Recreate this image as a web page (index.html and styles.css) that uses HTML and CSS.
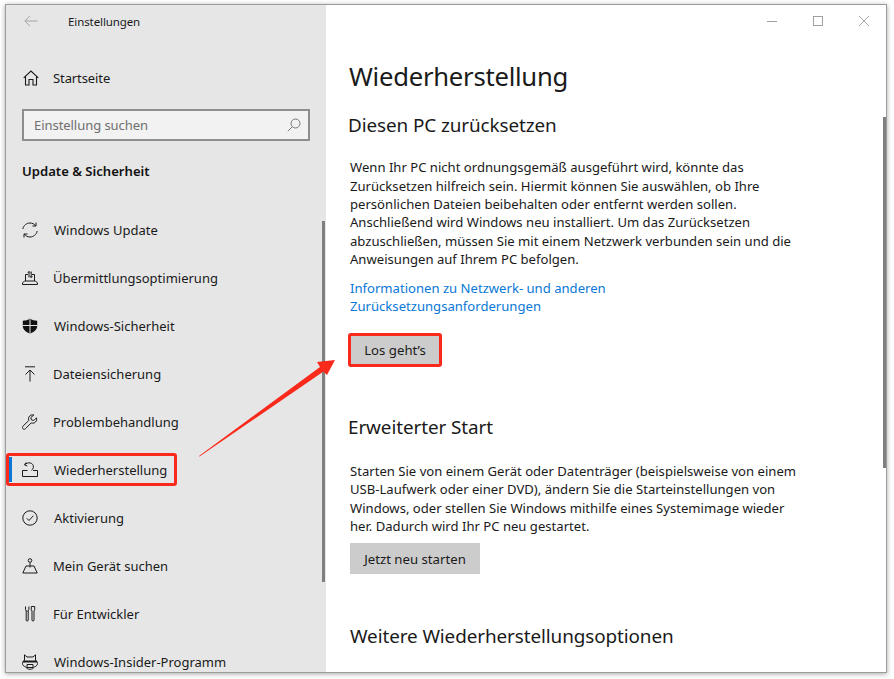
FILE: index.html
```html
<!DOCTYPE html>
<html lang="de">
<head>
<meta charset="utf-8">
<title>Einstellungen</title>
<link rel="stylesheet" href="styles.css">
</head>
<body>
<div class="window">
  <aside class="sidebar">
    <div class="titlebar">
      <svg class="back" width="14" height="12" viewBox="0 0 14 12"><path d="M13.500 6H1M6 .8 .8 6 6 11.200" fill="none" stroke="#a3a3a3" stroke-width="1"/></svg>
      <span class="apptitle">Einstellungen</span>
    </div>
    <div class="home">
      <svg class="icon" viewBox="0 0 16 16"><path d="M.7 7.800 8 1l7.300 6.800M2.500 6.500V15H6V9.500h4V15h3.500V6.500" fill="none" stroke="#1a1a1a" stroke-width="1.100"/></svg>
      <span>Startseite</span>
    </div>
    <div class="search">
      <span>Einstellung suchen</span>
      <svg width="14" height="14" viewBox="0 0 14 14"><circle cx="8.500" cy="5.500" r="4.500" fill="none" stroke="#777" stroke-width="1"/><path d="M5.300 8.700 .8 13.200" stroke="#777" stroke-width="1"/></svg>
    </div>
    <div class="section">Update &amp; Sicherheit</div>
    <nav class="nav">
      <div class="item">
        <svg class="icon" viewBox="0 0 16 16"><path d="M.8 7C1.500 3.500 4.500 1 8 1c2.300 0 4.400 1.100 5.700 2.800M15.200 9c-.7 3.500-3.700 6-7.200 6-2.300 0-4.400-1.100-5.700-2.800M14 .5V4h-3.500M2 15.500V12h3.500" fill="none" stroke="#1a1a1a" stroke-width="1"/></svg>
        <span>Windows Update</span>
      </div>
      <div class="item item-tight">
        <svg class="icon" viewBox="0 0 16 16"><path d="M3.500 11V4.500H6M12.500 11V4.500H10M.5 14.500h15v-1.500l-2-2h-11l-2 2zM7 7.500V1.500M5.800 2.800 7 1.500l1.200 1.300M9.200 1.500v6M8 6.200l1.200 1.300 1.200-1.300" fill="none" stroke="#1a1a1a" stroke-width="1"/></svg>
        <span>Übermittlungsoptimierung</span>
      </div>
      <div class="item">
        <svg class="icon" viewBox="0 0 16 16"><path d="M8 .5C6 2 3.500 2.700.8 2.700V8c0 3.500 3 6 7.200 7.500C12.200 14 15.200 11.500 15.200 8V2.700C12.500 2.700 10 2 8 .5z" fill="#111"/><path d="M8 .5v15M.8 7.500h14.400" stroke="#e6e6e6" stroke-width="1"/></svg>
        <span>Windows-Sicherheit</span>
      </div>
      <div class="item item-tight">
        <svg class="icon" viewBox="0 0 16 16"><path d="M3 .8h10M8 15.500V4M3.500 8.500 8 4l4.500 4.500" fill="none" stroke="#1a1a1a" stroke-width="1"/></svg>
        <span>Dateiensicherung</span>
      </div>
      <div class="item item-tight">
        <svg class="icon" viewBox="0 0 16 16"><path d="M10.500.8c-2.300 0-4 1.800-4 4 0 .6.100 1.100.3 1.600L1 12.200c-.8.800-.8 1.800-.1 2.500.8.800 1.700.8 2.500 0l5.800-5.800c.5.200 1 .3 1.500.3 2.300 0 4-1.800 4-4 0-.5-.1-1-.2-1.400l-2.700 2.700-2.400-.6-.6-2.400L11.900 1c-.4-.1-.9-.2-1.400-.2z" fill="none" stroke="#1a1a1a" stroke-width="1"/></svg>
        <span>Problembehandlung</span>
      </div>
      <div class="item active">
        <i class="marker"></i>
        <svg class="icon" viewBox="0 0 16 16"><path d="M.5 14.500h15v-6h-4.500M.5 14.500v-6h5M4 .5 2.500 2.800l2.800 1.200M2.800 2.800C4 1.300 6 .6 8 .9c2.300.4 3.700 2.400 3.400 4.500-.2 1.300-1 2.300-2 2.900" fill="none" stroke="#1a1a1a" stroke-width="1"/></svg>
        <span>Wiederherstellung</span>
      </div>
      <div class="item">
        <svg class="icon" viewBox="0 0 16 16"><circle cx="8" cy="8" r="7.200" fill="none" stroke="#1a1a1a" stroke-width="1"/><path d="M4.800 8.300 7 10.500l4.400-4.800" fill="none" stroke="#1a1a1a" stroke-width="1"/></svg>
        <span>Aktivierung</span>
      </div>
      <div class="item item-tight">
        <svg class="icon" viewBox="0 0 16 16"><circle cx="8" cy="2.500" r="1.800" fill="none" stroke="#1a1a1a" stroke-width="1"/><path d="M8 4.500v5M.8 15 4 8h8l3.200 7z" fill="none" stroke="#1a1a1a" stroke-width="1"/></svg>
        <span>Mein Gerät suchen</span>
      </div>
      <div class="item item-tight">
        <svg class="icon" viewBox="0 0 16 16"><path d="M3.500.5v3a1.700 1.700 0 0 0 1.700 1.700A1.700 1.700 0 0 0 6.900 3.500v-3M4.200 5.200v8.800a1 1 0 0 0 2 0V5.200M9.300.5h3.400v3.200l-.7 1.300v9a1 1 0 0 1-2 0V5l-.7-1.300z" fill="none" stroke="#1a1a1a" stroke-width="1"/></svg>
        <span>Für Entwickler</span>
      </div>
      <div class="item">
        <svg class="icon" viewBox="0 0 16 16"><path d="M2.500.8 5 3h6l2.500-2.200V6.500c1.300.6 2 1.500 2 2.800 0 2-1.400 3.200-3 3.400-.8 1.500-2.300 2.600-4.500 2.600s-3.700-1.100-4.500-2.600c-1.600-.2-3-1.400-3-3.400 0-1.300.7-2.200 2-2.800z" fill="none" stroke="#1a1a1a" stroke-width="1"/><path d="M1 7.500h14" stroke="#1a1a1a" stroke-width="2"/><path d="M5 10.500h6v3H5z" fill="none" stroke="#1a1a1a" stroke-width="1"/></svg>
        <span>Windows-Insider-Programm</span>
      </div>
    </nav>
    <div class="sidebar-thumb"></div>
  </aside>
  <main class="main">
    <div class="controls">
      <svg width="12" height="12" viewBox="0 0 12 12"><path d="M1 6.500h10" stroke="#a0a0a0"/></svg>
      <svg width="12" height="12" viewBox="0 0 12 12"><rect x="1.500" y="1.500" width="9" height="9" fill="none" stroke="#a0a0a0"/></svg>
      <svg width="12" height="12" viewBox="0 0 12 12"><path d="M1 1l10 10M11 1 1 11" stroke="#a0a0a0" stroke-width=".9"/></svg>
    </div>
    <h1>Wiederherstellung</h1>
    <h2 class="first">Diesen PC zurücksetzen</h2>
    <p class="para para-one">Wenn Ihr PC nicht ordnungsgemäß ausgeführt wird, könnte das<br>Zurücksetzen hilfreich sein. Hiermit können Sie auswählen, ob Ihre<br>persönlichen Dateien beibehalten oder entfernt werden sollen.<br>Anschließend wird Windows neu installiert. Um das Zurücksetzen<br>abzuschließen, müssen Sie mit einem Netzwerk verbunden sein und die<br>Anweisungen auf Ihrem PC befolgen.</p>
    <p class="link">Informationen zu Netzwerk- und anderen<br>Zurücksetzungsanforderungen</p>
    <button class="btn btn-marked">Los geht’s</button>
    <h2 class="second">Erweiterter Start</h2>
    <p class="para para-two">Starten Sie von einem Gerät oder Datenträger (beispielsweise von einem<br>USB-Laufwerk oder einer DVD), ändern Sie die Starteinstellungen von<br>Windows, oder stellen Sie Windows mithilfe eines Systemimage wieder<br>her. Dadurch wird Ihr PC neu gestartet.</p>
    <button class="btn btn-plain">Jetzt neu starten</button>
    <h2 class="third">Weitere Wiederherstellungsoptionen</h2>
    <div class="main-thumb"></div>
  </main>
</div>
<svg class="arrow" width="150" height="110" viewBox="0 0 150 110"><path d="M1 102 122 13 119 8 137 6 129 21 125.500 17.500 1.500 102.500z" fill="#f92a1c"/></svg>
</body>
</html>
```
FILE: styles.css
```css
*, *::after { box-sizing: border-box; }
html, body { margin: 0; height: 100%; background: #fff; overflow: hidden; }
body {
  position: relative;
  padding: 4px 0 0 5px;
  font-family: "Noto Sans", "Open Sans", sans-serif;
  color: #1a1a1a;
  font-size: 13px;
}
.window {
  width: 882px;
  height: 669px;
  display: flex;
  border: 1px solid #9c9c9c;
  background: #fff;
  box-shadow: 0 1px 5px rgba(0,0,0,.35);
  overflow: hidden;
  position: relative;
}
.sidebar {
  width: 320px;
  flex: none;
  background: #e6e6e6;
  position: relative;
  display: flex;
  flex-direction: column;
}
.sidebar > * { flex-shrink: 0; }
.titlebar {
  height: 34px;
  display: flex;
  align-items: center;
  padding-left: 18px;
}
.back { margin-right: 30px; margin-top: -2px; }
.apptitle { font-size: 11.500px; letter-spacing: -.1px; margin-top: -1px; }
.home {
  height: 20px;
  margin-top: 29px;
  padding-left: 17px;
  display: flex;
  align-items: center;
  gap: 15px;
}
.icon { width: 16px; height: 16px; flex: none; }
.home span { margin-left: -1px; letter-spacing: -.1px; }
.search {
  margin: 21px 16px 0;
  height: 32px;
  border: 2px solid #8e8e8e;
  background: #f2f2f2;
  color: #6f6f6f;
  display: flex;
  align-items: center;
  justify-content: space-between;
  padding: 0 7px 1px 10px;
  letter-spacing: -.05px;
}
.section {
  margin: 20px 16px 0;
  height: 20px;
  line-height: 20px;
  font-weight: 600;
  font-size: 13.100px;
  color: #111;
}
.nav { margin-top: 25px; }
.item {
  position: relative;
  height: 48px;
  display: flex;
  align-items: center;
  gap: 16px;
  padding-left: 16px;
  white-space: nowrap;
}
.item-tight { gap: 15px; }
.marker {
  position: absolute;
  left: 3px;
  top: 11px;
  width: 3px;
  height: 25px;
  background: #0a78d7;
}
.active::after {
  content: "";
  position: absolute;
  left: 0;
  top: 7px;
  width: 171px;
  height: 33px;
  border: 3px solid #f92a1c;
  border-radius: 3px;
}
.sidebar-thumb {
  position: absolute;
  top: 216px;
  right: 1px;
  width: 3px;
  height: 361px;
  background: #7f7f7f;
}
.main {
  flex: 1;
  position: relative;
  padding-left: 23px;
}
.controls {
  position: absolute;
  top: 10px;
  right: 16px;
  display: flex;
  gap: 34px;
}
h1 {
  margin: 54px 0 0;
  font-size: 25.650px;
  font-weight: 400;
  line-height: 36px;
  letter-spacing: -.25px;
}
h2 {
  font-size: 18.900px;
  font-weight: 400;
  line-height: 26px;
  margin: 0;
  letter-spacing: -.1px;
}
.first { margin: 17px 0 0 -1px; }
.second { margin: 47px 0 0 -1px; }
.third { margin: 49px 0 0 1px; }
.para {
  margin: 0 0 0 1px;
  font-size: 13.100px;
  line-height: 18.350px;
  white-space: nowrap;
}
.para-one { margin-top: 20.400px; }
.para-two { margin-top: 22px; }
.link {
  margin: 10.600px 0 0 1px;
  font-size: 13.100px;
  line-height: 18px;
  color: #0a78d7;
}
.btn {
  display: block;
  border: 0;
  background: #cccccc;
  font: inherit;
  font-size: 13.200px;
  color: #1a1a1a;
  padding: 0;
}
.btn-marked {
  width: 94px;
  height: 34px;
  margin: 18px 0 0 -1px;
  border: 3px solid #f92a1c;
  border-radius: 3px;
}
.btn-plain {
  width: 130px;
  height: 31px;
  margin: 8px 0 0 1px;
}
.main-thumb {
  position: absolute;
  top: 112px;
  right: 0;
  width: 3px;
  height: 351px;
  background: #7f7f7f;
}
.arrow {
  position: absolute;
  left: 198px;
  top: 354px;
}
```
